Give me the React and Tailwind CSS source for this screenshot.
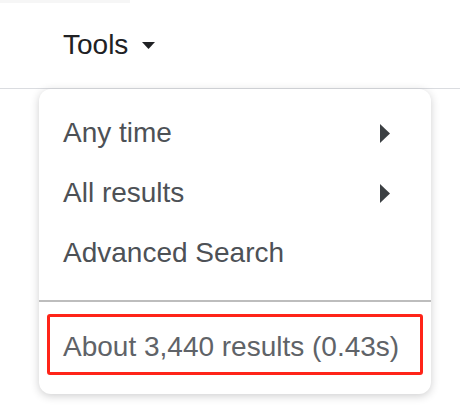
export default function App() {
  const items = [
    { label: "Any time", arrow: true },
    { label: "All results", arrow: true },
    { label: "Advanced Search", arrow: false },
  ];

  return (
    <div
      className="w-[460px] h-[414px] bg-white overflow-hidden"
      style={{ fontFamily: '"Liberation Sans", Arial, sans-serif' }}
    >
      {/* faint strip from the bar above */}
      <div className="h-[3px] w-[130px] bg-[#f6f6f6]" />

      {/* Tools header */}
      <div className="h-[86px] pt-[26px] border-b border-[#dadce0]">
        <div className="flex items-center pl-[63px] gap-[14px]">
          <span className="text-[28px] leading-[32px] text-[#202124]">Tools</span>
          <svg width="13" height="7" viewBox="0 0 13 7" className="mt-[1px]">
            <path d="M0 0h13L6.5 7z" fill="#202124" />
          </svg>
        </div>
      </div>

      {/* dropdown card */}
      <div className="ml-[39px] w-[392px] h-[305px] rounded-[12px] bg-white shadow-[0_2px_8px_rgba(32,33,36,0.22)] pt-[14px] flex flex-col">
        {items.map((it) => (
          <div key={it.label} className="h-[60px] flex items-center justify-between pl-[24px] pr-[41px]">
            <span className="text-[28px] leading-[32px] text-[#4d5156]">{it.label}</span>
            {it.arrow && (
              <svg width="10" height="19" viewBox="0 0 10 19">
                <path d="M0 0l10 9.5L0 19z" fill="#3c4043" />
              </svg>
            )}
          </div>
        ))}

        <div className="mt-[17px] h-[2px] bg-[#bdbdbd]" />

        <div className="mx-[8px] mt-[12px] border-[3px] border-[#ff2418] rounded-[3px] pl-[13px] pt-[14px] pb-[9px]">
          <span className="text-[28px] leading-[32px] text-[#5f6368] whitespace-nowrap">About 3,440 results (0.43s)</span>
        </div>
      </div>
    </div>
  );
}
